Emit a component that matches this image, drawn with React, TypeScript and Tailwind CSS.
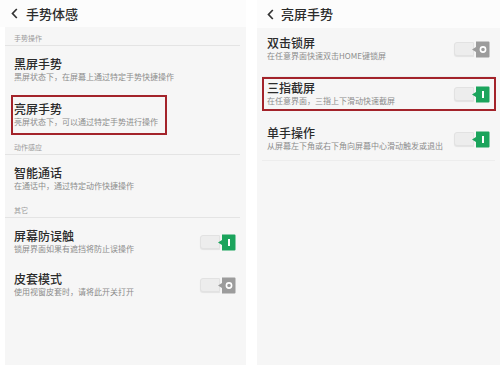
import React from 'react';

const font = { fontFamily: '"Noto Sans CJK SC", "Noto Sans", sans-serif' };

function Back() {
  return (
    <svg width="7" height="11" viewBox="0 0 7 11" className="shrink-0">
      <polyline points="5.8,1 1.5,5.5 5.8,10" fill="none" stroke="#333" strokeWidth="1.7" />
    </svg>
  );
}

function Toggle({ on }: { on: boolean }) {
  const color = on ? '#1ba45c' : '#9c9c9c';
  return (
    <div className="flex items-center shrink-0">
      <div className="h-[14px] w-[20px] -mr-[3px] rounded-l-[3px] bg-[#ededed] border border-[#e2e2e2] shadow-[0_1px_1px_rgba(0,0,0,0.08)]" />
      <svg width="19" height="17" viewBox="0 0 19 17">
        <path d="M5 0.5 H17.5 Q18.5 0.5 18.5 1.5 V15.5 Q18.5 16.5 17.5 16.5 H5 V11 L1 8.5 L5 6 Z" fill={color} />
        {on ? (
          <rect x="11" y="5" width="2" height="7" fill="#fff" />
        ) : (
          <circle cx="12" cy="8.5" r="2.6" fill="none" stroke="#fff" strokeWidth="1.6" />
        )}
      </svg>
    </div>
  );
}

function Section({ label, pt }: { label: string; pt: string }) {
  return (
    <div className={`${pt} pb-[2px] pl-[9px] -ml-[3px] -mr-[4px] border-b border-[#e4e4e4]`}>
      <div className="text-[7px] leading-[10px] text-[#9a9a9a]">{label}</div>
    </div>
  );
}

function Item({ title, sub, toggle }: { title: string; sub: string; toggle?: boolean }) {
  return (
    <div className="flex items-center justify-between">
      <div>
        <div className="text-[12px] leading-[14px] font-medium text-[#2b2b2b]">{title}</div>
        <div className="text-[8px] leading-[12px] text-[#8c8c8c] whitespace-nowrap">{sub}</div>
      </div>
      {toggle !== undefined && <Toggle on={toggle} />}
    </div>
  );
}

export default function App() {
  return (
    <div className="w-[500px] h-[365px] bg-white flex overflow-hidden" style={font}>
      {/* left screen */}
      <div className="w-[246px] flex flex-col">
        <div className="h-[27px] bg-[#fcfcfc] flex items-center gap-[8px] pl-[11px]">
          <Back />
          <span className="text-[13px] font-medium text-[#2b2b2b]">手势体感</span>
        </div>
        <div className="flex-1 ml-[5px] bg-[#f6f6f6] flex flex-col pl-[3px] pr-[10px]">
          <Section label="手势操作" pt="pt-[6px]" />
          <div className="pl-[6px] pt-[11px] h-[49px]">
            <Item title="黑屏手势" sub="黑屏状态下，在屏幕上通过特定手势快捷操作" />
          </div>
          <div className="w-[156px] h-[40px] ml-[3px] border-2 border-[#a3232a] pl-[1px] pt-[5px]">
            <Item title="亮屏手势" sub="亮屏状态下，可以通过特定手势进行操作" />
          </div>
          <Section label="动作感应" pt="pt-[7px]" />
          <div className="pl-[6px] pt-[11px] h-[36px]">
            <Item title="智能通话" sub="在通话中，通过特定动作快捷操作" />
          </div>
          <Section label="其它" pt="pt-[14px]" />
          <div className="pl-[6px] pt-[11px] h-[54px]">
            <Item title="屏幕防误触" sub="锁屏界面如果有遮挡将防止误操作" toggle={true} />
          </div>
          <div className="pl-[6px]">
            <Item title="皮套模式" sub="使用视窗皮套时，请将此开关打开" toggle={false} />
          </div>
        </div>
      </div>

      {/* right screen */}
      <div className="ml-[11px] w-[243px] flex flex-col">
        <div className="h-[28px] bg-[#fcfcfc] flex items-center gap-[7px] pl-[10px]">
          <Back />
          <span className="text-[13px] font-medium text-[#2b2b2b]">亮屏手势</span>
        </div>
        <div className="flex-1 bg-[#f6f6f6] flex flex-col">
          <div className="mx-[5px] px-[5px] pt-[8px] h-[49px] border-b border-[#ededed]">
            <Item title="双击锁屏" sub="在任意界面快速双击HOME键锁屏" toggle={false} />
          </div>
          <div className="ml-[5px] mr-[4px] h-[34px] border-2 border-[#a3232a] pl-[3px] pr-[4px] pt-[2px]">
            <Item title="三指截屏" sub="在任意界面，三指上下滑动快速截屏" toggle={true} />
          </div>
          <div className="mx-[5px] px-[5px] pt-[15px] h-[50px] border-b border-[#ededed]">
            <Item title="单手操作" sub="从屏幕左下角或右下角向屏幕中心滑动触发或退出" toggle={true} />
          </div>
        </div>
      </div>
    </div>
  );
}
